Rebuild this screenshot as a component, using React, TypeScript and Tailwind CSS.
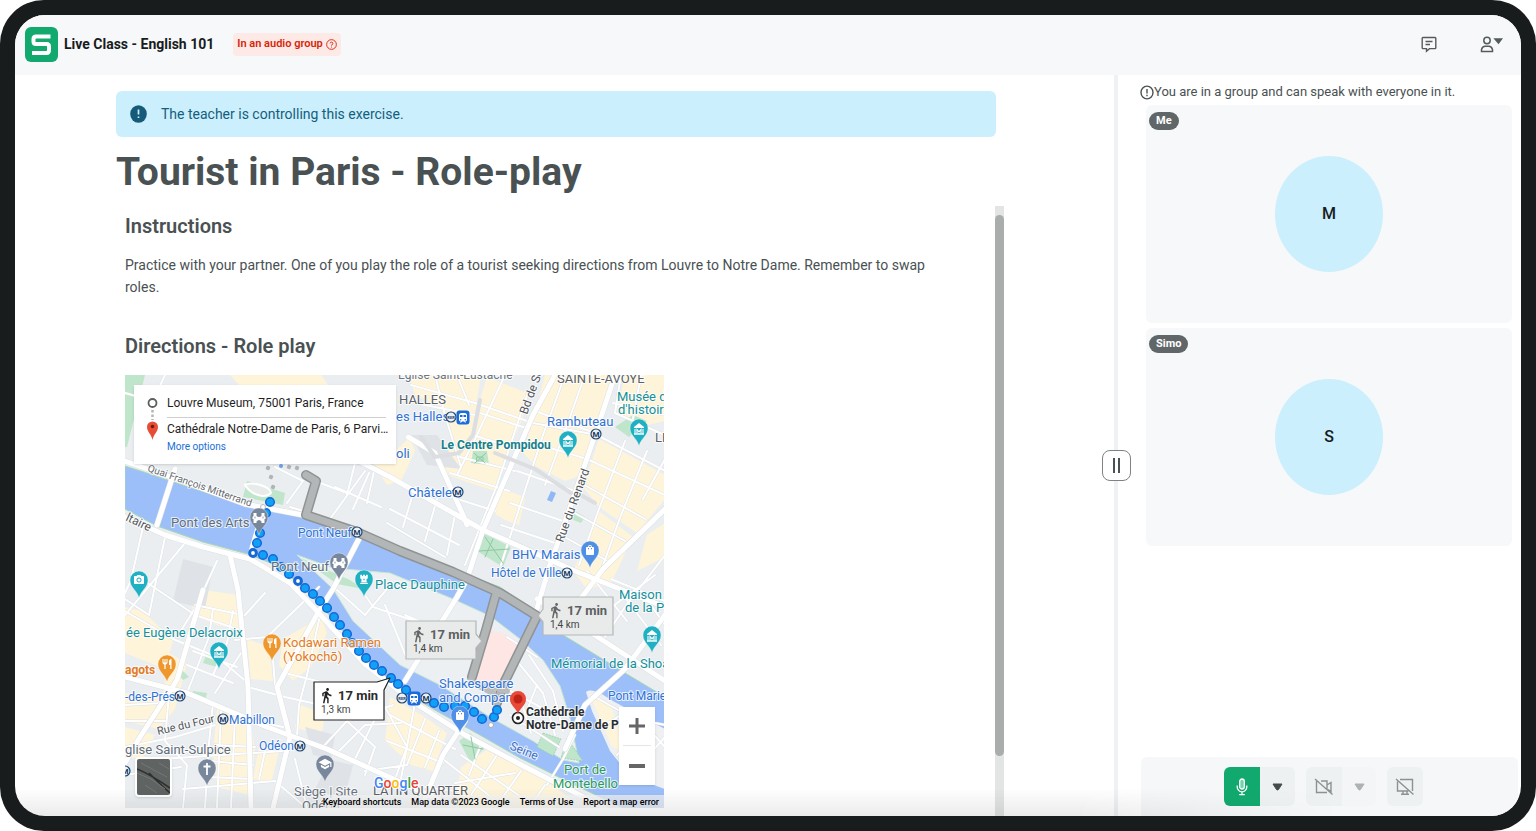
import type { ReactNode } from "react";
import { FaChessRook } from "react-icons/fa";
import {
  MdCameraAlt,
  MdDirectionsWalk,
  MdRestaurant,
  MdSchool,
  MdShoppingBag,
  MdTrain,
} from "react-icons/md";

const TEAL = "#1fb0c3";
const SLATE = "#78879b";
const ORANGE = "#ef972d";
const BLUE = "#4f8fe6";

const cream = [
  "M105 0H196L206 14H118Z",
  "M283 0H356L352 25 346 62 330 76 318 32 290 20Z",
  "M245 84 268 78 285 62 290 76 276 106 262 110Z",
  "M362 2 402 18 398 42 386 72 370 116 345 108 318 98 322 76 350 62 354 28Z",
  "M420 0H488L470 54 458 100 440 106 412 92 398 78 408 44Z",
  "M372 112 400 122 394 150 378 144 366 136Z",
  "M474 64 540 100V124L512 158 474 132 458 112Z",
  "M500 0H540V46L514 52 492 36Z",
  "M474 136 508 162 486 208 462 214 448 196Z",
  "M522 160 540 148V182L512 196Z",
  "M0 232 18 236 48 266 40 294 0 278Z",
  "M44 278 62 288 50 334 34 354 0 346V318L38 322Z",
  "M0 352 30 360 18 382 0 384Z",
  "M70 214 114 220 118 256 92 250 66 240Z",
  "M92 334 126 350 130 376 124 420 92 412 88 380Z",
  "M134 372 154 376 146 408 128 404Z",
  "M158 264 196 242 202 258 186 292 168 306 154 290Z",
  "M122 264 144 272 148 306 126 304Z",
  "M265 322 300 342 322 358 308 396 286 390 260 366Z",
  "M336 392 366 372 410 398 446 424 430 433 330 433Z",
  "M466 322 492 332 498 378 486 362Z",
  "M176 330 200 340 196 362 170 352Z",
];

const greyBlocks = [
  "M286 60 312 60 336 94 302 90Z",
  "M58 184 88 192 80 234 48 226Z",
  "M180 352 210 360 206 384 188 380Z",
  "M205 385 228 390 220 420 188 418Z",
];

const parks = [
  "M0 0H20L2 72H0Z",
  "M122 106 160 118 158 130 118 122Z",
  "M0 22 10 26 0 64Z",
  "M358 158 386 172 378 192 352 176Z",
  "M348 76 362 76 364 90 346 88Z",
  "M345 358 360 372 346 388 334 366Z",
  "M438 370 452 388 432 384Z",
  "M416 354 434 362 426 382 410 374Z",
  "M508 40 522 46 504 62 490 52Z",
  "M450 136 460 142 456 148 446 144Z",
  "M82 278 94 284 92 292 78 288Z",
  "M58 296 64 302 58 305 54 300Z",
  "M68 316 82 318 80 326 66 322Z",
  "M178 184 232 204 212 208Z",
];

const mainRoads = [
  "M218 78 265 102 358 155 450 196 540 232",
  "M430 0 408 40 358 155 342 204 332 222 280 306",
  "M340 346 318 380 296 433",
  "M490 0 470 60 448 124 425 190 410 240",
  "M0 142 40 160 78 172 125 184 165 208 190 234 240 289 290 328 340 360 400 392 480 433",
  "M0 86 60 107 120 129 178 140",
  "M0 302 62 318 142 352 202 374 275 407 332 433",
  "M236 160 208 214 194 236 152 312 165 362 148 433",
  "M78 215 52 305 15 362 0 388",
  "M105 180 113 215 123 312 126 433",
  "M540 134 478 194 454 226",
  "M412 224 465 257 540 306",
  "M440 374 460 330 500 294 540 240",
  "M50 94 32 150",
  "M283 62 310 78 338 140 342 150",
];

const streets = [
  "M0 18 28 26 92 40 M40 0 28 26",
  "M165 132 205 144 240 96 M190 106 222 118 M150 92 178 106 162 128",
  "M210 112 256 132 M228 134 244 98 M232 80 222 120 M250 92 242 128",
  "M286 10 350 28 408 48 472 60 540 96",
  "M380 0 352 60 332 100 M402 20 372 110 340 190",
  "M355 38 404 54 M348 60 398 76 M335 82 390 96 M325 98 384 116 M320 120 370 136",
  "M310 0 320 40 336 92 M332 0 344 30 M290 28 350 40",
  "M440 0 418 60 392 140 376 190 M460 0 440 56 420 110",
  "M410 36 470 58 M402 66 462 84 M392 96 450 116 M385 128 438 146 M376 150 430 168",
  "M462 84 540 120 M456 108 520 144 M446 136 500 166 M436 160 486 188",
  "M500 66 474 134 454 190 M522 76 496 140 476 196 M540 84 518 124",
  "M496 0 490 38 540 60 M516 0 508 44 M488 28 540 40",
  "M265 134 334 170 M262 148 320 182 M290 112 278 152 M312 124 300 166 M330 140 322 180",
  "M340 204 366 214 M462 196 502 246 M486 204 540 226 M540 180 500 232 480 262",
  "M498 220 536 270 M516 216 540 250 M476 240 530 200",
  "M18 152 6 205 0 218 M40 162 24 240 0 224 M60 168 0 240",
  "M0 236 48 264 92 282 123 308 M18 205 70 240 118 256 M70 230 118 240",
  "M92 186 72 230 52 262 M88 234 84 262 62 318",
  "M62 290 108 308 M68 276 112 292 M108 236 102 268 88 300 M90 318 116 278",
  "M110 265 142 262 194 212 M140 218 120 240 M146 260 150 310",
  "M123 312 160 322 196 330 M160 298 200 308 M196 236 182 300 174 330 172 362",
  "M125 345 158 352 M88 328 84 368 80 433 M44 318 40 366 62 390 58 433",
  "M0 330 38 328 M0 346 40 346 M0 372 50 362 90 350 M36 384 160 376",
  "M90 370 130 372 M86 386 128 390 M84 402 126 404 M58 414 150 406 178 430",
  "M0 400 56 392 M96 336 92 433 M110 340 106 433 M140 376 134 404",
  "M196 374 222 346 268 330 M210 380 240 350 276 348 M228 388 250 344 M170 384 182 433",
  "M222 346 250 372 240 400 M260 332 282 372 270 404 M300 344 282 390 240 396",
  "M265 340 330 374 M262 366 318 388 M290 328 276 404 M314 356 300 392",
  "M318 384 380 433 M336 380 412 433 M372 380 346 420 M396 396 370 433 M420 410 404 433",
  "M355 372 344 400 M330 408 390 398 M300 412 330 416",
  "M212 215 240 240 262 214 M232 208 248 232 290 246 M260 230 282 284 M280 240 330 262",
  "M378 312 430 340 M392 286 418 318 430 360 M404 280 428 316 438 356 M385 340 434 372",
  "M395 322 406 358 M412 310 396 350 M382 262 412 282",
  "M470 322 520 350 540 372 M480 350 502 336 M492 380 520 346 540 350 M508 398 540 362",
  "M422 410 438 384 450 360",
];

const blueDots = [
  [145, 127], [141, 138], [135, 158], [132, 168], [138, 180], [148, 184], [156, 192], [164, 199],
  [180, 213], [188, 219], [195, 226], [202, 233], [209, 242], [215, 250], [222, 259], [227, 268],
  [234, 276], [241, 283], [249, 290], [257, 296], [266, 303], [273, 309], [281, 315], [309, 328],
  [319, 332], [330, 331], [340, 331], [349, 337], [357, 344], [369, 342], [372, 335],
];

const metros = [
  [232, 157], [471, 59], [333, 117], [442, 198], [55, 321], [98, 344], [175, 371], [301, 323], [0, 396],
];

type Label = {
  x: number;
  y: number;
  text: string;
  color: string;
  size?: number;
  bold?: boolean;
  rotate?: number;
};

const labels: Label[] = [
  { x: 273, y: 4, text: "Eglise Saint-Eustache", color: "#6b7682", size: 12 },
  { x: 432, y: 8, text: "SAINTE-AVOYE", color: "#5b6166" },
  { x: 274, y: 29, text: "HALLES", color: "#5b6166" },
  { x: 530, y: 67, text: "LE", color: "#5b6166" },
  { x: 248, y: 420, text: "LATIN QUARTER", color: "#5b6166" },
  { x: 271, y: 46, text: "es Halles", color: "#2f72d6" },
  { x: 271, y: 83, text: "oli", color: "#2f72d6" },
  { x: 422, y: 51, text: "Rambuteau", color: "#2f72d6" },
  { x: 283, y: 122, text: "Châtelet", color: "#2f72d6" },
  { x: 387, y: 184, text: "BHV Marais", color: "#2f72d6" },
  { x: 366, y: 202, text: "Hôtel de Ville", color: "#2f72d6", size: 12 },
  { x: 173, y: 162, text: "Pont Neuf", color: "#2f72d6", size: 12 },
  { x: 314, y: 313, text: "Shakespeare", color: "#2f72d6" },
  { x: 314, y: 327, text: "and Company", color: "#2f72d6" },
  { x: 483, y: 325, text: "Pont Marie", color: "#2f72d6", size: 12 },
  { x: 0, y: 326, text: "-des-Prés", color: "#2f72d6", size: 12 },
  { x: 104, y: 349, text: "Mabillon", color: "#2f72d6", size: 12 },
  { x: 134, y: 375, text: "Odéon", color: "#2f72d6", size: 12 },
  { x: 384, y: 374, text: "Seine", color: "#3b6fc4", size: 12, rotate: 22 },
  { x: 492, y: 26, text: "Musée d'art et", color: "#15909c" },
  { x: 493, y: 39, text: "d'histoire du", color: "#15909c" },
  { x: 316, y: 74, text: "Le Centre Pompidou", color: "#15808c", size: 12, bold: true },
  { x: 250, y: 214, text: "Place Dauphine", color: "#15909c" },
  { x: 1, y: 262, text: "ée Eugène Delacroix", color: "#15909c" },
  { x: 494, y: 224, text: "Maison", color: "#15909c" },
  { x: 500, y: 237, text: "de la Photo", color: "#15909c" },
  { x: 426, y: 293, text: "Mémorial de la Shoah", color: "#15909c" },
  { x: 46, y: 152, text: "Pont des Arts", color: "#5f6d7c" },
  { x: 146, y: 196, text: "Pont Neuf", color: "#5f6d7c" },
  { x: 0, y: 379, text: "glise Saint-Sulpice", color: "#5f6d7c" },
  { x: 169, y: 421, text: "Siège | Site", color: "#6b7682" },
  { x: 177, y: 435, text: "Odéon", color: "#6b7682" },
  { x: 158, y: 272, text: "Kodawari Ramen", color: "#e37a24" },
  { x: 158, y: 286, text: "(Yokochō)", color: "#e37a24" },
  { x: 0, y: 299, text: "agots", color: "#e37a24", size: 12, bold: true },
  { x: 439, y: 399, text: "Port de", color: "#2b9b5c" },
  { x: 428, y: 413, text: "Montebello", color: "#2b9b5c" },
  { x: 22, y: 96, text: "Quai François Mitterrand", color: "#666b70", size: 10, rotate: 19 },
  { x: 0, y: 145, text: "ltaire", color: "#50555a", size: 12, rotate: 26 },
  { x: 402, y: 40, text: "Bd de Sébastopol", color: "#50555a", size: 12, rotate: -70 },
  { x: 438, y: 168, text: "Rue du Renard", color: "#50555a", size: 12, rotate: -70 },
  { x: 33, y: 360, text: "Rue du Four", color: "#50555a", size: 11, rotate: -13 },
  { x: 401, y: 341, text: "Cathédrale", color: "#2a2e31", size: 12, bold: true },
  { x: 401, y: 354, text: "Notre-Dame de Paris", color: "#2a2e31", size: 12, bold: true },
];

const museum = (
  <g fill="#fff">
    <path d="M-5-2 0-6 5-2V-1H-5Z" />
    <path d="M-5 4.200H5V5.700H-5Z" />
    <path d="M-4 0V4M4 0V4M-2 4V0.500L0 2.800 2 0.500V4" fill="none" stroke="#fff" strokeWidth="1.100" />
  </g>
);

const bridge = (
  <g fill="#fff">
    <path d="M-5.500-5H-2.500V-2Q0 0 2.500-2V-5H5.500V-2L6.500-1V1H5.500V5H2.500V3.500Q0 0.500-2.500 3.500V5H-5.500V1H-6.500V-1L-5.500-2Z" />
    <path d="M-4.400-1.500H-3.600V0.500H-4.400ZM3.600-1.500H4.400V0.500H3.600Z" fill={SLATE} />
  </g>
);

type Pin = { x: number; y: number; color: string; icon: ReactNode };

const pins: Pin[] = [
  { x: 14, y: 206, color: TEAL, icon: <MdCameraAlt x={-6} y={-7} size={12} color="#fff" /> },
  { x: 94, y: 277, color: TEAL, icon: museum },
  { x: 239, y: 205, color: TEAL, icon: <FaChessRook x={-5} y={-6} size={10} color="#fff" /> },
  { x: 443, y: 66, color: TEAL, icon: museum },
  { x: 514, y: 54, color: TEAL, icon: museum },
  { x: 527, y: 261, color: TEAL, icon: museum },
  { x: 134, y: 143, color: SLATE, icon: bridge },
  { x: 214, y: 188, color: SLATE, icon: bridge },
  { x: 82, y: 394, color: SLATE, icon: <path d="M0-6V6M-3.500-2.500H3.500" stroke="#fff" strokeWidth="1.800" /> },
  { x: 200, y: 390, color: SLATE, icon: <MdSchool x={-7} y={-8} size={14} color="#fff" /> },
  { x: 42, y: 290, color: ORANGE, icon: <MdRestaurant x={-6} y={-7} size={12} color="#fff" /> },
  { x: 147, y: 269, color: ORANGE, icon: <MdRestaurant x={-6} y={-7} size={12} color="#fff" /> },
  { x: 465, y: 176, color: BLUE, icon: <MdShoppingBag x={-6} y={-7} size={12} color="#fff" /> },
  { x: 335, y: 341, color: BLUE, icon: <MdShoppingBag x={-6} y={-7} size={12} color="#fff" /> },
];

function MapPin({ x, y, color, icon }: Pin) {
  return (
    <g transform={`translate(${x} ${y})`}>
      <path d="M0 17C-2 9-9 7-9-1A9 9 0 0 1 9-1C9 7 2 9 0 17Z" fill={color} stroke="#fff" strokeOpacity="0.6" strokeWidth="0.6" />
      {icon}
    </g>
  );
}

function Metro({ x, y, text = "M" }: { x: number; y: number; text?: string }) {
  return (
    <g transform={`translate(${x} ${y})`}>
      <circle r="5" fill="#e8f0f8" stroke="#24466f" strokeWidth="1.2" />
      <text y={text === "M" ? 3 : 2} textAnchor="middle" fontSize={text === "M" ? 8 : 4} fontWeight="700" fill="#1d3a61">
        {text}
      </text>
    </g>
  );
}

function Train({ x, y }: { x: number; y: number }) {
  return (
    <g transform={`translate(${x} ${y})`}>
      <rect x="-6.5" y="-6.5" width="13" height="14" rx="3" fill="#1a6bdb" />
      <MdTrain x={-6} y={-5} size={12} color="#fff" />
    </g>
  );
}

type BubbleProps = { x: number; y: number; distance: string; tail: string; active?: boolean };

function RouteBubble({ x, y, distance, tail, active }: BubbleProps) {
  const fill = active ? "#fff" : "#e9ebeb";
  const stroke = active ? "#222" : "#b4b7b8";
  return (
    <g transform={`translate(${x} ${y})`}>
      <path d={tail} fill={fill} stroke={stroke} strokeWidth="1.2" strokeLinejoin="round" />
      <MdDirectionsWalk x={4} y={5} size={17} color={active ? "#222" : "#666"} />
      <text x="24" y="18" fontSize="13" fontWeight="700" fill={active ? "#2b2b2b" : "#5c5f61"}>
        17 min
      </text>
      <text x="7" y="31" fontSize="10" fill="#444">
        {distance}
      </text>
    </g>
  );
}

function MapCanvas() {
  return (
    <svg viewBox="0 0 539 433" className="block h-[433px] w-[539px]" fontFamily="Roboto, Arial, sans-serif" role="img" aria-label="Walking route">
      <rect width="539" height="433" fill="#ebeef0" />
      {cream.map((d) => <path key={d} d={d} fill="#fef4da" />)}
      {greyBlocks.map((d) => <path key={d} d={d} fill="#dfe2e6" />)}
      {parks.map((d) => <path key={d} d={d} fill="#bfe5cb" />)}

      {/* The Seine, then the two islands over it */}
      <path
        d="M0 91C60 110 105 128 175 142L232 156 275 175 375 212 412 238 438 260 466 277 500 298 540 322V433H498L452 411 395 383 355 360 308 334 275 314 242 285 208 244 182 217 172 207 148 189 123 179 78 167 32 151 0 134Z"
        fill="#9dbff9"
        stroke="#a3d8b3"
        strokeWidth="1"
      />
      <path
        d="M172 180 208 193 265 198 328 224 365 241 395 264 418 285 435 311 445 343 454 388 438 385 408 366 365 342 315 310 275 290 228 246 208 214Z"
        fill="#edf0f2"
        stroke="#c7e8d0"
        strokeWidth="1"
      />
      <path d="M461 317C466 313 476 318 486 325L540 354V414L505 401 485 376 467 336Z" fill="#eef0f1" />
      <path d="M466 322 486 330 500 380 486 370Z" fill="#fef4da" />
      <path d="M176 183 225 205 238 214 212 209Z" fill="#bfe5cb" />
      <path d="M442 363 458 386 436 383Z M418 358 436 364 428 381 412 372Z" fill="#bfe5cb" stroke="#8fc9a2" strokeWidth="0.7" strokeDasharray="2 1" />
      <path d="M365 256C378 256 386 262 393 269L377 310C371 316 357 314 350 303Z" fill="#fde6e3" />

      <g fill="none" strokeLinejoin="round" strokeLinecap="round">
        {streets.map((d) => <path key={d} d={d} stroke="#dce0e4" strokeWidth="2.8" />)}
        {streets.map((d) => <path key={d} d={d} stroke="#fff" strokeWidth="2" />)}
        {mainRoads.map((d) => <path key={d} d={d} stroke="#dce0e4" strokeWidth="6" />)}
        {mainRoads.map((d) => <path key={d} d={d} stroke="#fff" strokeWidth="5" />)}
        <path d="M139 131 125 178" stroke="#fff" strokeWidth="4" />
        <path d="M370 78 410 94 446 118M452 118 470 128" stroke="#dcdee1" strokeWidth="4" />
        <path d="M355 25 348 60 334 78 310 82 296 62" stroke="#dcdee1" strokeWidth="4" />
        <path d="M360 162 378 188M384 174 354 176M368 164 360 182M349 78 360 88M361 78 350 88M352 82H358V86H352Z" stroke="#8fc9a2" strokeWidth="1" />
        <path d="M346 362 350 384M338 370 358 374" stroke="#8fc9a2" strokeWidth="1" />
      </g>
      <path d="M426 116 431 118 427 127 422 125Z" fill="#8fb8f6" />
      <path d="M120 110C128 106 146 112 146 118C140 124 126 120 120 110Z" fill="#e7ecea" stroke="#fff" strokeWidth="2" />

      <g fill="none" strokeLinejoin="round" strokeLinecap="round">
        <path d="M181 100 191 106 181 140 232 157 275 176 328 197 375 218 412 241 378 310 372 328M371 219 361 255 347 302" stroke="#8f9394" strokeWidth="10" />
        <path d="M181 100 191 106 181 140 232 157 275 176 328 197 375 218 412 241 378 310 372 328M371 219 361 255 347 302" stroke="#b2b6b7" strokeWidth="7" />
        <path d="M345 306 368 318M362 310 382 316" stroke="#b9bcbd" strokeWidth="6" />
      </g>
      {[[143, 93], [146, 102], [148, 112], [164, 92], [172, 93]].map(([x, y]) => (
        <rect key={x} x={x - 2} y={y - 2} width="4" height="4" rx="1" fill="#b1b4b6" transform={`rotate(20 ${x} ${y})`} />
      ))}
      <circle cx="156" cy="91" r="2" fill="#6ba2ee" />

      {blueDots.map(([x, y]) => (
        <circle key={`${x}-${y}`} cx={x} cy={y} r="4.3" fill="#10a0f5" stroke="#1568d6" strokeWidth="1.5" />
      ))}
      {[[128, 178], [173, 206]].map(([x, y]) => (
        <circle key={x} cx={x} cy={y} r="3.4" fill="#fff" stroke="#1568d6" strokeWidth="3" />
      ))}
      <circle cx="366" cy="350" r="2.5" fill="#fff" stroke="#aaa" />
      <circle cx="138" cy="132" r="2.5" fill="#fff" stroke="#bbb" />

      {labels.map(({ x, y, text, color, size = 13, bold, rotate }) => (
        <text
          key={`${text}${y}`}
          transform={rotate ? `translate(${x} ${y}) rotate(${rotate})` : `translate(${x} ${y})`}
          fontSize={size}
          fontWeight={bold ? 700 : 400}
          fill={color}
          stroke="#fff"
          strokeOpacity="0.75"
          strokeWidth="2"
          paintOrder="stroke"
        >
          {text}
        </text>
      ))}
      {metros.map(([x, y]) => <Metro key={`${x}-${y}`} x={x} y={y} />)}
      <Metro x={326} y={42} text="RER" />
      <Metro x={277} y={323} text="RER" />
      <Train x={338} y={42} />
      <Train x={289} y={323} />
      {pins.map((pin) => <MapPin key={`${pin.x}-${pin.y}`} {...pin} />)}

      <RouteBubble x={281} y={246} distance="1,4 km" tail="M0 0H70V13L76 20 70 27V38H0Z" />
      <RouteBubble x={418} y={222} distance="1,4 km" tail="M0 0H70V38H0V25L-5 19 0 12Z" />
      <RouteBubble x={189} y={307} distance="1,3 km" tail="M0 0H63L76-4 70 8V38H0Z" active />

      <circle cx="393" cy="343" r="5.5" fill="#fff" stroke="#222" strokeWidth="1.6" />
      <circle cx="393" cy="343" r="2" fill="#222" />
      <path d="M393 340C392 333 385 331 385 324A8 8 0 0 1 401 324C401 331 394 333 393 340Z" fill="#e84a3a" />
      <circle cx="393" cy="324" r="4.5" fill="#c02418" />

      <text x="249" y="413" fontSize="14" fontWeight="500" stroke="#fff" strokeWidth="2" paintOrder="stroke">
        <tspan fill="#4285f4">G</tspan>
        <tspan fill="#ea4335">o</tspan>
        <tspan fill="#fbbc05">o</tspan>
        <tspan fill="#4285f4">g</tspan>
        <tspan fill="#34a853">l</tspan>
        <tspan fill="#ea4335">e</tspan>
      </text>
    </svg>
  );
}

function RouteMap() {
  return (
    <div className="relative h-[433px] w-[539px] overflow-hidden">
      <MapCanvas />
      <div className="absolute top-[10px] left-[9px] flex h-[79px] w-[262px] bg-white pr-[10px] shadow">
        <svg viewBox="0 0 33 79" className="h-[79px] w-[33px] shrink-0">
          <circle cx="18.500" cy="18" r="4" fill="none" stroke="#5a5e60" strokeWidth="1.800" />
          <path d="M18.500 25v10" stroke="#b5b5b5" strokeWidth="2.500" strokeDasharray="2.500 2" />
          <path d="M18.500 55C17.500 49 13 47 13 42A5.500 5.500 0 0 1 24 42C24 47 19.500 49 18.500 55Z" fill="#e74c35" />
          <circle cx="18.500" cy="41.500" r="1.800" fill="#6d1b12" />
        </svg>
        <div className="flex min-w-0 flex-1 flex-col pt-2 text-[12px] whitespace-nowrap text-[#1f1f1f]">
          <p className="border-b border-[#cfcfcf] pb-1 leading-5">Louvre Museum, 75001 Paris, France</p>
          <p className="pt-px leading-5">Cathédrale Notre-Dame de Paris, 6 Parvi…</p>
          <a href="#options" className="text-[10px] leading-4 text-[#1a6fd8]">
            More options
          </a>
        </div>
      </div>
      <button type="button" aria-label="Satellite view" className="absolute bottom-[11px] left-[10px] h-10 w-[37px] overflow-hidden rounded-sm border-2 border-white bg-[#5f6361] shadow">
        <svg viewBox="0 0 33 36" preserveAspectRatio="none" className="h-full w-full">
          <path d="M0 10C10 14 17 18 33 29M12 14C18 20 24 26 33 34" stroke="#2d302f" strokeWidth="1.600" fill="none" />
          <path d="M0 14 14 20 28 30M4 4 30 18M8 26 20 34M22 4 32 10" stroke="#737775" fill="none" />
        </svg>
      </button>
      <div className="absolute right-[9px] bottom-[23px] flex w-9 flex-col items-center bg-white text-[#666] shadow">
        <button type="button" aria-label="Zoom in" className="flex h-[38px] w-full items-center justify-center">
          <svg viewBox="0 0 18 18" className="size-[18px]">
            <path d="M9 1v16M1 9h16" stroke="currentColor" strokeWidth="3" />
          </svg>
        </button>
        <span className="h-px w-7 bg-[#e5e5e5]" />
        <button type="button" aria-label="Zoom out" className="flex h-[39px] w-full items-center justify-center">
          <svg viewBox="0 0 18 18" className="size-[18px]">
            <path d="M1 9h16" stroke="currentColor" strokeWidth="4" />
          </svg>
        </button>
      </div>
      <div className="absolute right-0 bottom-0 flex h-[13px] items-center gap-[10px] bg-[#f5f5f5]/70 pr-[5px] text-[9px] leading-3 font-medium text-black">
        <button type="button">Keyboard shortcuts</button>
        <span>Map data ©2023 Google</span>
        <a href="#terms">Terms of Use</a>
        <a href="#report">Report a map error</a>
      </div>
    </div>
  );
}

function Logo() {
  return (
    <svg viewBox="0 0 33 35" className="h-[35px] w-[33px]" aria-hidden="true">
      <rect width="33" height="35" rx="6" fill="#12a96f" />
      <path
        d="M25.500 9.500H11Q8.500 9.500 8.500 12V14.500Q8.500 17 11 17H21.500Q24 17 24 19.500V23Q24 26 21.500 26H7"
        stroke="#fff"
        strokeWidth="4"
        fill="none"
      />
    </svg>
  );
}

function Header() {
  return (
    <header className="flex h-[60px] shrink-0 items-center bg-[#f7f8fa] pr-[18px] pb-[2px] pl-[10px]">
      <Logo />
      <h2 className="ml-[6px] text-[14px] font-bold text-[#181c1c]">Live Class - English 101</h2>
      <span className="ml-[19px] flex h-[23px] items-center gap-[3px] rounded bg-[#fde9e5] px-1 text-[11px] font-semibold text-[#d5260c]">
        In an audio group
        <svg viewBox="0 0 12 12" className="size-[11px]" fill="none" stroke="currentColor">
          <circle cx="6" cy="6" r="5.300" />
          <path d="M4.500 4.800A1.500 1.500 0 1 1 6 6.400V7.100M6 8.300V9.300" />
        </svg>
      </span>
      <button type="button" aria-label="Chat" className="ml-auto text-[#555b5c]">
        <svg viewBox="0 0 16 17" className="h-[17px] w-4" fill="none" stroke="currentColor" strokeWidth="1.400">
          <path d="M2 1.500h12q.8 0 .8.800v9.500q0 .800-.8.800H8.500L5.500 15.200V12.600H2q-.8 0-.8-.800V2.300q0-.8.800-.8ZM4.500 5.500h7M4.500 8.500h4.500" />
        </svg>
      </button>
      <button type="button" aria-label="Account" className="ml-[43px] flex text-[#555b5c]">
        <svg viewBox="0 0 23 17" className="h-[17px] w-[23px]" fill="none" stroke="currentColor" strokeWidth="1.500">
          <circle cx="7" cy="4.500" r="3.200" />
          <path d="M1.500 15.500V13.500Q2.500 10.300 5 10.300H9Q11.500 10.300 12.500 13.500V15.500Z" />
          <path d="M15 3H21.500L18.500 7Z" fill="currentColor" />
        </svg>
      </button>
    </header>
  );
}

function Exercise() {
  return (
    <main className="flex min-w-0 flex-1 flex-col pt-4 pr-[110px] pl-[101px] text-[#495153]">
      <div className="mr-2 flex h-[46px] shrink-0 items-center rounded-md bg-[#cbeffc] pl-[14px] text-[14px] text-[#155e7d]">
        <svg viewBox="0 0 17 18" className="h-[18px] w-[17px]">
          <ellipse cx="8.500" cy="9" rx="8.300" ry="8.800" fill="#155a78" />
          <path d="M8.500 4.500v5M8.500 11.500v1.600" stroke="#cbeffc" strokeWidth="1.700" />
        </svg>
        <p className="ml-[14px]">The teacher is controlling this exercise.</p>
      </div>
      <h1 className="mt-[10px] text-[39px] leading-[50px] font-bold">Tourist in Paris - Role-play</h1>
      <div className="mt-[9px] flex min-h-0 flex-1">
        <div className="min-w-0 flex-1 overflow-hidden pr-10 pl-[9px]">
          <h3 className="mt-[6px] text-[20px] leading-7 font-semibold">Instructions</h3>
          <p className="mt-[14px] text-[14px] leading-[22px]">
            Practice with your partner. One of you play the role of a tourist seeking directions from Louvre to Notre Dame. Remember to swap roles.
          </p>
          <h3 className="mt-[34px] mb-[15px] text-[20px] leading-7 font-semibold">Directions - Role play</h3>
          <RouteMap />
        </div>
        <div className="w-[9px] shrink-0 bg-[#e3e5e5] pt-[9px]">
          <div className="h-[90%] rounded-full bg-[#a9adab]" />
        </div>
      </div>
    </main>
  );
}

function Participant({ name, initial }: { name: string; initial: string }) {
  return (
    <li className="flex h-[218px] flex-col rounded-md bg-[#f7f8fa] pt-[7px]">
      <span className="ml-[3px] flex h-[18px] w-fit items-center rounded-full bg-[#616768] px-[7px] text-[11px] font-bold text-white">
        {name}
      </span>
      <span className="mx-auto mt-[26px] flex h-[116px] w-[108px] items-center justify-center rounded-[50%] bg-[#cbeffc] text-[16px] font-medium text-[#181c1c]">
        {initial}
      </span>
    </li>
  );
}

function Stroked({ children }: { children: ReactNode }) {
  return (
    <svg viewBox="0 0 20 20" className="size-5" fill="none" stroke="currentColor" strokeWidth="1.400">
      {children}
    </svg>
  );
}

function Caret() {
  return (
    <svg viewBox="0 0 11 8" className="h-2 w-[11px]">
      <path d="M1 1h9L6.500 6.500Q5.500 7.500 4.500 6.500Z" fill="currentColor" stroke="currentColor" strokeLinejoin="round" />
    </svg>
  );
}

function Controls() {
  const button = "flex h-[39px] items-center justify-center bg-[#eef1f2]";
  return (
    <div className="mr-[3px] ml-[23px] flex h-[59px] shrink-0 items-center justify-center gap-[11px] rounded-t-md bg-[#f6f7f9] pr-3">
      <div className="flex text-[#444b4c]">
        <button type="button" aria-label="Microphone" className="flex h-[39px] w-9 items-center justify-center rounded-l-md bg-[#12a96f] text-white">
          <svg viewBox="0 0 12 18" className="h-[18px] w-3" fill="none" stroke="currentColor" strokeWidth="1.300">
            <rect x="3.700" y="1" width="4.600" height="10" rx="2.300" fill="#7bd0ac" />
            <path d="M1.200 7.500V9a4.800 4.800 0 0 0 9.600 0V7.500M6 14v2.600M3.200 16.600h5.600" />
          </svg>
        </button>
        <button type="button" aria-label="Microphone options" className={`${button} w-[35px] rounded-r-md`}>
          <Caret />
        </button>
      </div>
      <div className="flex text-[#8c9293]">
        <button type="button" aria-label="Camera" className={`${button} w-9 rounded-l-md`}>
          <Stroked>
            <path d="M1 2 18.500 17.500M7 4h6v8.500M2.500 4v11.500h10.500M13 8l4-2.500v9l-3-2" />
          </Stroked>
        </button>
        <button type="button" aria-label="Camera options" className="flex h-[39px] w-[34px] items-center justify-center rounded-r-md bg-[#f3f5f6] text-[#adb2b3]">
          <Caret />
        </button>
      </div>
      <button type="button" aria-label="Share screen" className={`${button} w-9 rounded-md text-[#8c9293]`}>
        <Stroked>
          <path d="M1 2 18.500 17.500M5 2.500h12.500v11.500M2.500 4.500v9.500h11M8 14v3M12 14v3M6 17.300h8" />
        </Stroked>
      </button>
    </div>
  );
}

function Sidebar() {
  return (
    <aside className="flex w-[403px] shrink-0 flex-col">
      <p className="mt-2 ml-[22px] flex items-center text-[13px] leading-[18px] text-[#495153]">
        <svg viewBox="0 0 14 15" className="h-[15px] w-[14px]" fill="none" stroke="currentColor" strokeWidth="1.400">
          <ellipse cx="7" cy="7.500" rx="6" ry="6.400" />
          <path d="M7 4v4.500M7 9.800v1.500" />
        </svg>
        You are in a group and can speak with everyone in it.
      </p>
      <ul className="mt-1 mr-[9px] ml-7 flex flex-col gap-[5px]">
        <Participant name="Me" initial="M" />
        <Participant name="Simo" initial="S" />
      </ul>
      <div className="flex-1" />
      <Controls />
    </aside>
  );
}

export default function App() {
  return (
    <div className="h-screen bg-white font-[Roboto,Inter,sans-serif]">
      <div className="h-full rounded-[44px] bg-[#181c1c] p-[15px]">
        <div className="relative flex h-full flex-col overflow-hidden rounded-[30px] bg-white">
          <Header />
          <div className="flex min-h-0 flex-1">
            <Exercise />
            <div className="relative flex w-1 shrink-0 items-center justify-center bg-[#eff2f4] pt-10">
              <button type="button" aria-label="Resize panels" className="flex h-[31px] w-[29px] shrink-0 items-center justify-center gap-[3px] rounded-lg border border-[#7d8384] bg-white">
                <span className="h-[15px] w-[2px] bg-[#495153]" />
                <span className="h-[15px] w-[2px] bg-[#495153]" />
              </button>
            </div>
            <Sidebar />
          </div>
          <div className="pointer-events-none absolute bottom-0 left-0 h-7 w-[88%] bg-linear-to-t from-black/8 to-transparent mask-r-from-80%" />
        </div>
      </div>
    </div>
  );
}
